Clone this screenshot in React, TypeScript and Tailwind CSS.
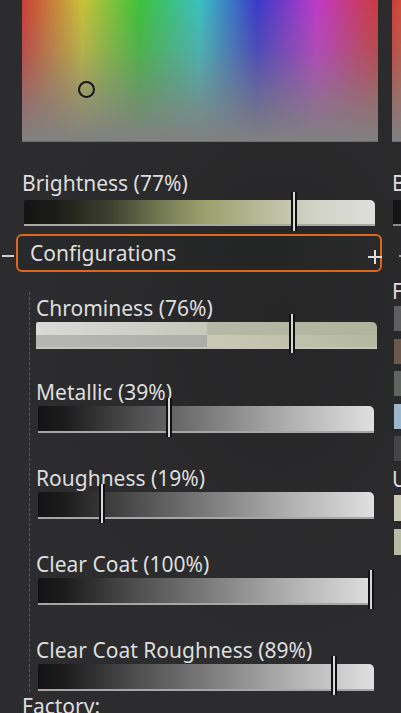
import React from 'react'

const hue =
  'linear-gradient(to bottom, rgba(128,128,128,0) 0%, rgba(128,128,128,0.25) 35%, rgba(128,128,128,0.75) 75%, #808080 100%), linear-gradient(to right, #cc3c38 0%, #c8c23a 17%, #3cc23a 33%, #3cc0c0 50%, #3a3ac8 66%, #c03ac8 83%, #cc3a3c 100%)'

const grey = 'linear-gradient(to right, #131313 0%, #1c1c1c 8%, #454545 25%, #7a7a7a 50%, #b0b0b0 75%, #e0e0e0 100%)'

type SliderProps = {
  label: string
  value: number
  bg: string
  barClass: string
  topClass: string
}

function Thumb({ value }: { value: number }) {
  return (
    <div
      className="absolute -top-[8px] -bottom-[4px] w-[6px] border-x-2 border-[#111] bg-[#d6d6d6]"
      style={{ left: `calc(${value}% - 3px)` }}
    />
  )
}

function Slider({ label, value, bg, barClass, topClass }: SliderProps) {
  return (
    <div className={topClass}>
      <div className="text-[21px] leading-6 whitespace-nowrap">{label}</div>
      <div className={`relative mt-[2px] h-[27px] ${barClass}`}>
        <div
          className="h-full rounded-tr-[5px] rounded-tl-[2px] border-b-2 border-[#a6a6a6]"
          style={{ background: bg }}
        />
        <Thumb value={value} />
      </div>
    </div>
  )
}

function Chrominess() {
  return (
    <div className="pt-[4px]">
      <div className="text-[21px] leading-6 whitespace-nowrap">Chrominess (76%)</div>
      <div className="relative mt-[2px] h-[27px] w-[341px]">
        <div className="h-full rounded-tr-[5px] rounded-tl-[2px] overflow-hidden border-b-2 border-[#c4c6bc] grid grid-rows-2">
          <div className="flex">
            <div className="w-[50%] bg-[linear-gradient(to_right,#dadad8,#c6c8bc)]" />
            <div className="flex-1 bg-[linear-gradient(to_right,#b6b9a6,#b1b49c)]" />
          </div>
          <div className="flex">
            <div className="w-[50%] bg-[linear-gradient(to_right,#b6b6b2,#adaea8)]" />
            <div className="flex-1 bg-[linear-gradient(to_right,#c9cbb8,#b5b8a0)]" />
          </div>
        </div>
        <Thumb value={75} />
      </div>
    </div>
  )
}

function Picker() {
  return (
    <div className="relative h-[142px] border-b border-[#6e6e6e]" style={{ background: hue }}>
      <div className="absolute left-[56px] top-[81px] w-[17px] h-[17px] rounded-full border-2 border-[#161616]" />
    </div>
  )
}

const swatches = ['#5e5e5e', '#6b5a4b', '#5f665f', '#9cb6cc', '#454546']
const userSwatches = ['#c9cab5', '#b8bba4']

export default function App() {
  return (
    <div className="w-[401px] h-[713px] overflow-hidden flex bg-[radial-gradient(ellipse_at_70%_45%,#262627_0%,#2c2c2e_60%)] text-[#dedede] font-['Noto_Sans','Open_Sans',sans-serif]">
      {/* main panel */}
      <div className="w-[392px] shrink-0 relative">
        <div className="ml-[22px] w-[356px]">
          <Picker />
        </div>

        <div className="pl-[22px] mt-[29px]">
          <div className="text-[21px] leading-6">Brightness (77%)</div>
          <div className="relative mt-[5px] ml-[2px] w-[351px] h-[26px]">
            <div className="h-full rounded-tr-[5px] rounded-tl-[2px] border-b-2 border-[#a8a8a4] bg-[linear-gradient(to_right,#141414_0%,#1d1e18_10%,#3f4230_25%,#7e845a_42%,#9ca16e_52%,#b4b894_66%,#d0d2c4_82%,#dedfdc_100%)]" />
            <div
              className="absolute -top-[8px] -bottom-[5px] w-[6px] border-x-2 border-[#111] bg-[#d6d6d6]"
              style={{ left: 'calc(77% - 3px)' }}
            />
          </div>
        </div>

        {/* configurations header */}
        <div className="relative mt-[8px] ml-[16px] w-[366px] h-[38px] rounded-[6px] border-2 border-[#e0661c] bg-[linear-gradient(to_right,#28292a,#242525_70%,#2a2a2b)] flex items-center pl-[12px]">
          <span className="text-[21px] leading-6">Configurations</span>
          <div className="absolute -left-[16px] top-[19px] w-[12px] h-[2px] bg-[#d0d0d0]" />
          <div className="absolute -right-[2px] top-[14px] w-[14px] h-[14px]">
            <div className="absolute left-0 right-0 top-[6px] h-[2px] bg-[#dcdcdc]" />
            <div className="absolute top-0 bottom-0 left-[6px] w-[2px] bg-[#dcdcdc]" />
          </div>
        </div>

        <div className="mt-[20px] ml-[29px] border-l border-dashed border-[#5a5a5a] pl-[6px] pb-[1px]">
          <Chrominess />
          <Slider label="Metallic (39%)" value={39} bg={grey} barClass="ml-[2px] w-[336px]" topClass="mt-[31px]" />
          <Slider label="Roughness (19%)" value={19} bg={grey} barClass="ml-[2px] w-[336px]" topClass="mt-[33px]" />
          <Slider label="Clear Coat (100%)" value={99} bg={grey} barClass="ml-[2px] w-[336px]" topClass="mt-[33px]" />
          <Slider label="Clear Coat Roughness (89%)" value={88} bg={grey} barClass="ml-[2px] w-[336px]" topClass="mt-[33px]" />
        </div>

        <div className="pl-[22px] mt-[2px] text-[21px] leading-6">Factory:</div>
      </div>

      {/* second panel, clipped */}
      <div className="flex-1 overflow-hidden">
        <div className="w-[356px]">
          <Picker />
          <div className="mt-[29px] text-[21px] leading-6 whitespace-nowrap">Brightness (50%)</div>
          <div className="mt-[5px] ml-[1px] h-[26px] border-b-2 border-[#8a8a8a] bg-[linear-gradient(to_right,#141414,#808080)]" />
          <div className="relative mt-[29px] h-[2px]">
            <div className="absolute left-[7px] w-[4px] h-[2px] bg-[#9a9a9a]" />
          </div>
          <div className="mt-[22px] text-[21px] leading-6">Factory:</div>
          <div className="mt-[3px] ml-[2px] flex flex-col gap-[7.5px]">
            {swatches.map((c) => (
              <div key={c} className="w-[25px] h-[25px]" style={{ background: c }} />
            ))}
          </div>
          <div className="mt-[6px] text-[21px] leading-6">User:</div>
          <div className="mt-[4px] ml-[2px] flex flex-col gap-[7.5px]">
            {userSwatches.map((c) => (
              <div key={c} className="w-[25px] h-[26px]" style={{ background: c }} />
            ))}
          </div>
        </div>
      </div>
    </div>
  )
}
